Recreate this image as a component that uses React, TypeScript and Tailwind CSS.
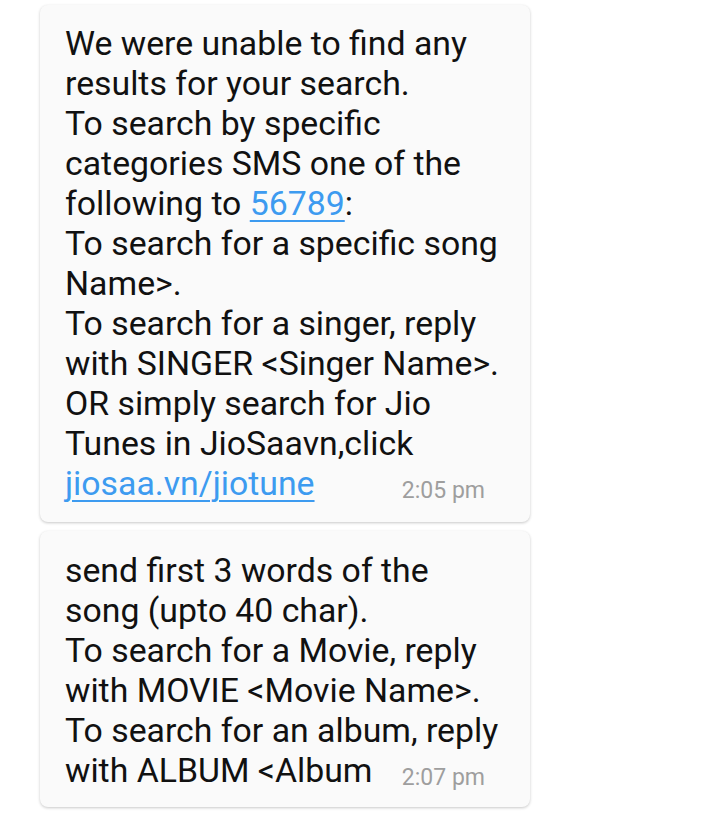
import React from "react"

const font = { fontFamily: "Roboto, 'Noto Sans', sans-serif" }

function Link({ children }: { children: React.ReactNode }) {
  return (
    <span className="text-[#3d9bf0] underline decoration-2 underline-offset-[5px]">{children}</span>
  )
}

function Bubble({
  lines,
  last,
  time,
  pad,
}: {
  lines: React.ReactNode[]
  last: React.ReactNode
  time: string
  pad: string
}) {
  return (
    <div className={`w-[490px] rounded-[8px] bg-[#fafafa] pl-[25px] pr-[45px] shadow-[0_1px_3px_rgba(0,0,0,0.22)] ${pad}`}>
      <div className="text-[33.8px] leading-[40px] text-[#111]">
        {lines.map((l, i) => (
          <div key={i} className="h-[40px] whitespace-nowrap">{l}</div>
        ))}
        <div className="flex h-[40px] items-baseline whitespace-nowrap">
          <span>{last}</span>
          <span className="ml-auto translate-y-[3px] text-[23px] text-[#9e9e9e]">{time}</span>
        </div>
      </div>
    </div>
  )
}

export default function App() {
  return (
    <div className="min-h-[823px] w-[720px] bg-white pl-[40px] pt-[5px]" style={font}>
      <div className="flex flex-col gap-[9px]">
        <Bubble
          pad="pt-[19px] pb-[18px]"
          lines={[
            "We were unable to find any",
            "results for your search.",
            "To search by specific",
            "categories SMS one of the",
            <>following to <Link>56789</Link>:</>,
            "To search for a specific song",
            "Name>.",
            "To search for a singer, reply",
            "with SINGER <Singer Name>.",
            "OR simply search for Jio",
            "Tunes in JioSaavn,click",
          ]}
          last={<Link>jiosaa.vn/jiotune</Link>}
          time="2:05 pm"
        />
        <Bubble
          pad="pt-[20px] pb-[16px]"
          lines={[
            "send first 3 words of the",
            "song (upto 40 char).",
            "To search for a Movie, reply",
            "with MOVIE <Movie Name>.",
            "To search for an album, reply",
          ]}
          last="with ALBUM <Album"
          time="2:07 pm"
        />
      </div>
    </div>
  )
}
